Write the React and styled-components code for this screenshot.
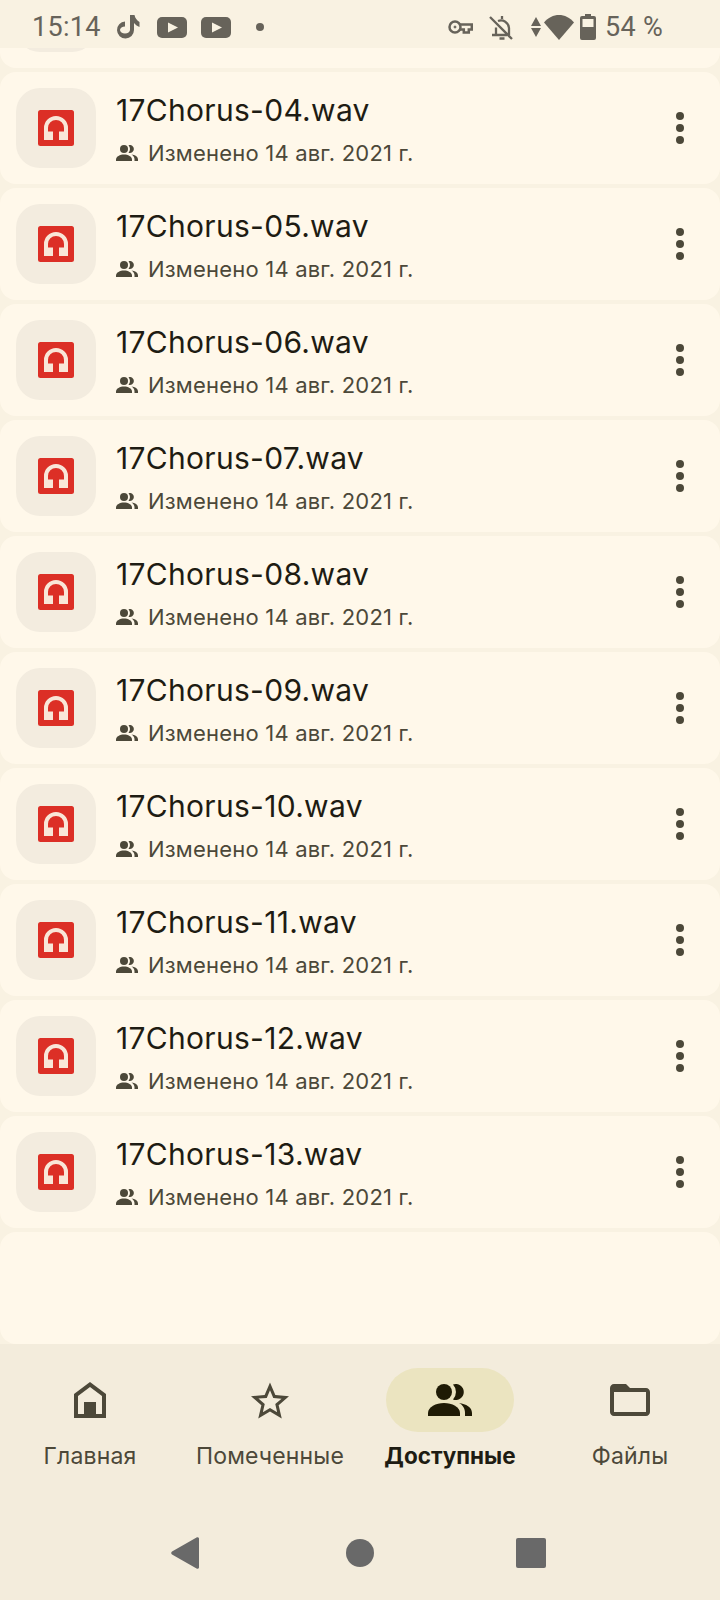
import React from 'react';
import styled, { createGlobalStyle } from 'styled-components';

const GlobalStyle = createGlobalStyle`
  html, body {
    margin: 0;
    padding: 0;
    background: #f3ecdc;
  }
`;

const Screen = styled.div`
  width: 720px;
  height: 1600px;
  display: flex;
  flex-direction: column;
  overflow: hidden;
  background: #f9f2e2;
  font-family: Inter, Roboto, sans-serif;
`;

const StatusBar = styled.div`
  height: 48px;
  flex: none;
  box-sizing: border-box;
  display: flex;
  align-items: center;
  justify-content: space-between;
  padding: 6px 57px 0 32px;
  color: #67635a;
  font-family: Roboto, sans-serif;
  font-size: 27px;
`;

const StatusGroup = styled.div`
  display: flex;
  align-items: center;
`;

const StatusText = styled.span`
  letter-spacing: 0.3px;
  margin-left: ${(props) => props.$gap || 0}px;
`;

const StatusIcon = styled.svg`
  display: block;
  flex: none;
  margin-left: ${(props) => props.$gap || 0}px;
`;

const List = styled.div`
  flex: 1;
  display: flex;
  flex-direction: column;
  gap: 4px;
  min-height: 0;
`;

const Card = styled.div`
  height: 112px;
  flex: none;
  display: flex;
  align-items: center;
  padding: 0 16px;
  background: #fff8ea;
  border-radius: 16px;
  box-sizing: border-box;
`;

const CutCard = styled(Card)`
  height: 20px;
  padding-bottom: 16px;
  align-items: flex-end;
  overflow: hidden;
  border-radius: 0 0 16px 16px;
`;

const Tile = styled.div`
  width: 80px;
  height: 80px;
  flex: none;
  display: flex;
  align-items: center;
  justify-content: center;
  background: #f3ecdf;
  border-radius: 24px;
`;

const FileText = styled.div`
  flex: 1;
  min-width: 0;
  margin-left: 20px;
  padding-top: 5px;
  display: flex;
  flex-direction: column;
`;

const FileName = styled.div`
  font-size: 30px;
  line-height: 36px;
  letter-spacing: 0.3px;
  color: #1e1c13;
`;

const FileMeta = styled.div`
  display: flex;
  align-items: center;
  margin-top: 9px;
  font-size: 22px;
  line-height: 32px;
  letter-spacing: 0.2px;
  color: #4c4839;
`;

const MetaLabel = styled.span`
  margin-left: 10px;
`;

const MoreButton = styled.div`
  width: 24px;
  display: flex;
  flex-direction: column;
  align-items: center;
  gap: 4px;
  margin-right: 12px;
`;

const MoreDot = styled.span`
  width: 8px;
  height: 8px;
  border-radius: 50%;
  background: #4c4839;
`;

const BottomNav = styled.div`
  height: 256px;
  flex: none;
  display: flex;
  flex-direction: column;
  background: #f3ecdc;
`;

const NavTabs = styled.div`
  display: grid;
  grid-template-columns: repeat(4, 180px);
  padding-top: 24px;
`;

const NavTab = styled.div`
  display: flex;
  flex-direction: column;
  align-items: center;
`;

const NavPill = styled.div`
  width: 128px;
  height: 64px;
  display: flex;
  align-items: center;
  justify-content: center;
  border-radius: 32px;
  background: ${(props) => (props.$active ? '#ebe4c0' : 'transparent')};
`;

const NavLabel = styled.div`
  margin-top: 8px;
  font-size: ${(props) => (props.$active ? 22.5 : 23)}px;
  line-height: 32px;
  letter-spacing: ${(props) => (props.$active ? 0 : 0.15)}px;
  font-weight: ${(props) => (props.$active ? 700 : 400)};
  color: ${(props) => (props.$active ? '#1e1c13' : '#4c4839')};
`;

const SystemBar = styled.div`
  flex: 1;
  display: flex;
  align-items: center;
  padding: 34px 0 0 171px;
`;

const SystemKey = styled.svg`
  display: block;
  margin-left: ${(props) => props.$gap || 0}px;
`;

const HeadphonesIcon = () => (
  <svg width="36" height="36" viewBox="0 0 36 36">
    <rect width="36" height="36" rx="2.500" fill="#dc2f26" />
    <path d="M8 26V18a10 10 0 0 1 20 0v8" fill="none" stroke="#f9e6d8" strokeWidth="4" />
    <path d="M6 21.500h9V30H6zM21 21.500h9V30h-9z" fill="#f9e6d8" />
  </svg>
);

const PeopleIcon = ({ width = 22, color = '#4c4839' }) => (
  <svg width={width} height={(width * 32) / 44} viewBox="0 0 44 32" fill={color}>
    <circle cx="16" cy="8" r="8" />
    <path d="M0 32v-3c0-6 8-10 16-10s16 4 16 10v3z" />
    <path d="M25 .5a8 8 0 1 1 0 15 11 11 0 0 0 0-15z" />
    <path d="M31 19c7 1 13 4 13 10v3h-7v-3c0-4-2-8-6-10z" />
  </svg>
);

const files = ['04', '05', '06', '07', '08', '09', '10', '11', '12', '13'];

const tabs = [
  {
    label: 'Главная',
    icon: (
      <svg width="32" height="36" viewBox="0 0 32 36" fill="#4c4839">
        <path fillRule="evenodd" d="M16 0 32 12v24H0V12zM16 5 4 14v18h24V14z" />
        <rect x="10" y="20" width="12" height="16" />
      </svg>
    ),
  },
  {
    label: 'Помеченные',
    icon: (
      <svg width="38" height="37" viewBox="2 2 20 19" fill="#4c4839">
        <path d="M22 9.240l-7.190-.620L12 2 9.190 8.630 2 9.240l5.460 4.730L5.820 21 12 17.270 18.180 21l-1.630-7.030L22 9.240zM12 15.400l-3.760 2.270 1-4.280-3.320-2.880 4.380-.380L12 6.100l1.710 4.040 4.380.380-3.320 2.880 1 4.280L12 15.400z" />
      </svg>
    ),
  },
  { label: 'Доступные', active: true, icon: <PeopleIcon width={44} color="#1f1b05" /> },
  {
    label: 'Файлы',
    icon: (
      <svg width="40" height="32" viewBox="2 4 20 16" fill="#4c4839">
        <path d="M20 6h-8l-2-2H4c-1.100 0-1.990.900-1.990 2L2 18c0 1.100.900 2 2 2h16c1.100 0 2-.900 2-2V8c0-1.100-.900-2-2-2zm0 12H4V8h16v10z" />
      </svg>
    ),
  },
];

const FileRow = ({ suffix }) => (
  <Card>
    <Tile><HeadphonesIcon /></Tile>
    <FileText>
      <FileName>17Chorus-{suffix}.wav</FileName>
      <FileMeta>
        <PeopleIcon />
        <MetaLabel>Изменено 14 авг. 2021 г.</MetaLabel>
      </FileMeta>
    </FileText>
    <MoreButton>
      <MoreDot />
      <MoreDot />
      <MoreDot />
    </MoreButton>
  </Card>
);

const YoutubeIcon = ({ gap }) => (
  <StatusIcon $gap={gap} width="30" height="21" viewBox="0 0 30 21">
    <rect width="30" height="21" rx="5" fill="#67635a" />
    <path d="M11 5.500l10 5-10 5z" fill="#f9f2e2" />
  </StatusIcon>
);

export default function App() {
  return (
    <Screen>
      <GlobalStyle />
      <StatusBar>
        <StatusGroup>
          <StatusText>15:14</StatusText>
          <StatusIcon $gap={15} width="24" height="24" viewBox="0 0 24 24" fill="#67635a">
            <path fillRule="evenodd" d="M9 6.500a8.500 8.500 0 1 0 9 8.500V8c1.500 2 3.500 3 5.500 4V7C21 5.500 19 3 18.500 0H14v15a5 3.500 0 1 1-5-3.500z" />
            <circle cx="9" cy="15" r="3" fill="#f9f2e2" />
          </StatusIcon>
          <YoutubeIcon gap={17} />
          <YoutubeIcon gap={14} />
          <StatusIcon $gap={25} width="8" height="8" viewBox="0 0 8 8">
            <circle cx="4" cy="4" r="4" fill="#67635a" />
          </StatusIcon>
        </StatusGroup>
        <StatusGroup>
          <StatusIcon width="25" height="14" viewBox="0 0 25 14" fill="none" stroke="#67635a" strokeWidth="2.500">
            <circle cx="7" cy="7" r="5.500" />
            <path d="M12 4.500h11.800v5h-3v3h-5v-3H12" />
            <circle cx="7" cy="7" r="1" fill="#67635a" strokeWidth="1" />
          </StatusIcon>
          <StatusIcon $gap={16} width="24" height="25" viewBox="0 0 24 25" fill="none" stroke="#67635a" strokeWidth="2.300">
            <path d="M7 20v-7.500M9 6a8 8 0 0 1 11 7v7M3 20h15M1 2l22 22M13 1v3M10.500 23.500h5" />
          </StatusIcon>
          <StatusIcon $gap={18} width="10" height="20" viewBox="0 0 10 20" fill="#67635a">
            <path d="M5 0l5 9H0zM5 20 0 11h10z" />
          </StatusIcon>
          <StatusIcon $gap={3} width="30" height="25" viewBox="0 0 30 25" fill="#67635a">
            <path d="M0 7.500C8-2.500 22-2.500 30 7.500L15 25z" />
          </StatusIcon>
          <StatusIcon $gap={6} width="16" height="26" viewBox="0 0 16 26">
            <path d="M5 0h6v2h3a2 2 0 0 1 2 2v20a2 2 0 0 1-2 2H2a2 2 0 0 1-2-2V4a2 2 0 0 1 2-2h3z" fill="#67635a" />
            <rect x="2.500" y="5" width="11" height="8" fill="#f9f2e2" />
          </StatusIcon>
          <StatusText $gap={9}>54 %</StatusText>
        </StatusGroup>
      </StatusBar>
      <List>
        <CutCard>
          <Tile />
        </CutCard>
        {files.map((suffix) => (
          <FileRow key={suffix} suffix={suffix} />
        ))}
        <Card />
      </List>
      <BottomNav>
        <NavTabs>
          {tabs.map((tab) => (
            <NavTab key={tab.label}>
              <NavPill $active={tab.active}>{tab.icon}</NavPill>
              <NavLabel $active={tab.active}>{tab.label}</NavLabel>
            </NavTab>
          ))}
        </NavTabs>
        <SystemBar>
          <SystemKey width="28" height="32" viewBox="0 0 28 32">
            <path d="M26 .3a1.500 1.500 0 0 1 2 1.500v28.400a1.500 1.500 0 0 1-2 1.500L1 17.500a1.800 1.800 0 0 1 0-3z" fill="#696969" />
          </SystemKey>
          <SystemKey $gap={147} width="28" height="28" viewBox="0 0 28 28">
            <circle cx="14" cy="14" r="14" fill="#696969" />
          </SystemKey>
          <SystemKey $gap={142} width="30" height="30" viewBox="0 0 30 30">
            <rect width="30" height="30" rx="2" fill="#696969" />
          </SystemKey>
        </SystemBar>
      </BottomNav>
    </Screen>
  );
}
